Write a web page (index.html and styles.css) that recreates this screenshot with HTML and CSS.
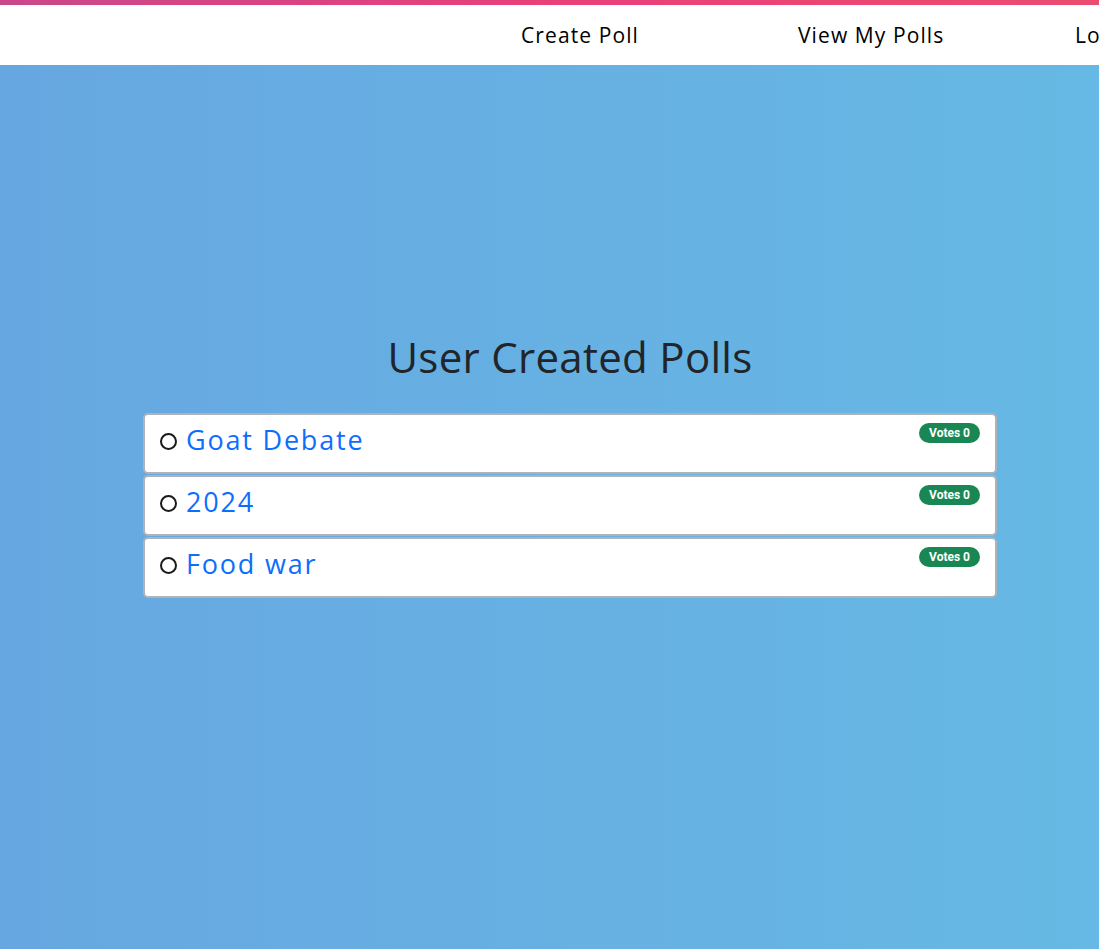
FILE: index.html
```html
<!DOCTYPE html>
<html lang="en">
<head>
<meta charset="utf-8">
<title>User Created Polls</title>
<link rel="stylesheet" href="styles.css">
</head>
<body>
<div class="topline"></div>
<nav class="navbar">
  <ul class="nav-list">
    <li class="nav-item"><a href="#">Create Poll</a></li>
    <li class="nav-item"><a href="#">View My Polls</a></li>
    <li class="nav-item"><a href="#">Logout</a></li>
  </ul>
</nav>
<main class="main">
  <section class="polls">
    <h1 class="polls-title">User Created Polls</h1>
    <ul class="poll-list">
      <li class="poll-card">
        <span class="radio"></span>
        <a class="poll-name" href="#">Goat Debate</a>
        <span class="badge">Votes 0</span>
      </li>
      <li class="poll-card">
        <span class="radio"></span>
        <a class="poll-name" href="#">2024</a>
        <span class="badge">Votes 0</span>
      </li>
      <li class="poll-card">
        <span class="radio"></span>
        <a class="poll-name" href="#">Food war</a>
        <span class="badge">Votes 0</span>
      </li>
    </ul>
  </section>
</main>
</body>
</html>
```

FILE: styles.css
```css
* { box-sizing: border-box; }
html, body {
  margin: 0;
  padding: 0;
  height: 100%;
  overflow: hidden;
}
body {
  font-family: "Open Sans", "Liberation Sans", sans-serif;
  background: linear-gradient(90deg, #67a7e1 0%, #66b9e4 100%);
  display: flex;
  flex-direction: column;
}
.topline {
  height: 5px;
  background: linear-gradient(90deg, #c9488a 0%, #e8407a 50%, #ec4c6f 100%);
  flex: none;
}
.navbar {
  height: 60px;
  background: #fff;
  flex: none;
  display: flex;
  align-items: center;
  overflow: hidden;
}
.nav-list {
  list-style: none;
  margin: 0;
  padding: 0 0 0 521px;
  display: flex;
  white-space: nowrap;
}
.nav-item {
  width: 277px;
  flex: none;
}
.nav-item a {
  color: #000;
  text-decoration: none;
  font-size: 21px;
  letter-spacing: 1.1px;
}
.main {
  flex: 1;
  padding: 264px 0 0 143px;
}
.polls {
  width: 854px;
}
.polls-title {
  margin: 0 0 28px;
  text-align: center;
  font-weight: 400;
  font-size: 42px;
  line-height: 56px;
  color: #212529;
  letter-spacing: 0.3px;
}
.poll-list {
  list-style: none;
  margin: 0;
  padding: 0;
  display: flex;
  flex-direction: column;
  gap: 1px;
}
.poll-card {
  height: 61px;
  background: #fff;
  border: 2px solid #adb3b9;
  border-radius: 5px;
  display: flex;
  align-items: flex-start;
  padding: 8px 15px 0 15px;
}
.radio {
  width: 17px;
  height: 17px;
  border: 2px solid #1a1a1a;
  border-radius: 50%;
  margin: 10px 9px 0 0;
  flex: none;
}
.poll-name {
  color: #0d6efd;
  text-decoration: none;
  font-size: 27px;
  font-weight: 500;
  line-height: 34px;
  letter-spacing: 1.8px;
}
.badge {
  margin-left: auto;
  margin-top: 0;
  background: #198754;
  color: #fff;
  font-family: "Roboto", "Liberation Sans", sans-serif;
  font-weight: 700;
  font-size: 12px;
  line-height: 20px;
  height: 20px;
  padding: 0 10px;
  border-radius: 10px;
}
```
